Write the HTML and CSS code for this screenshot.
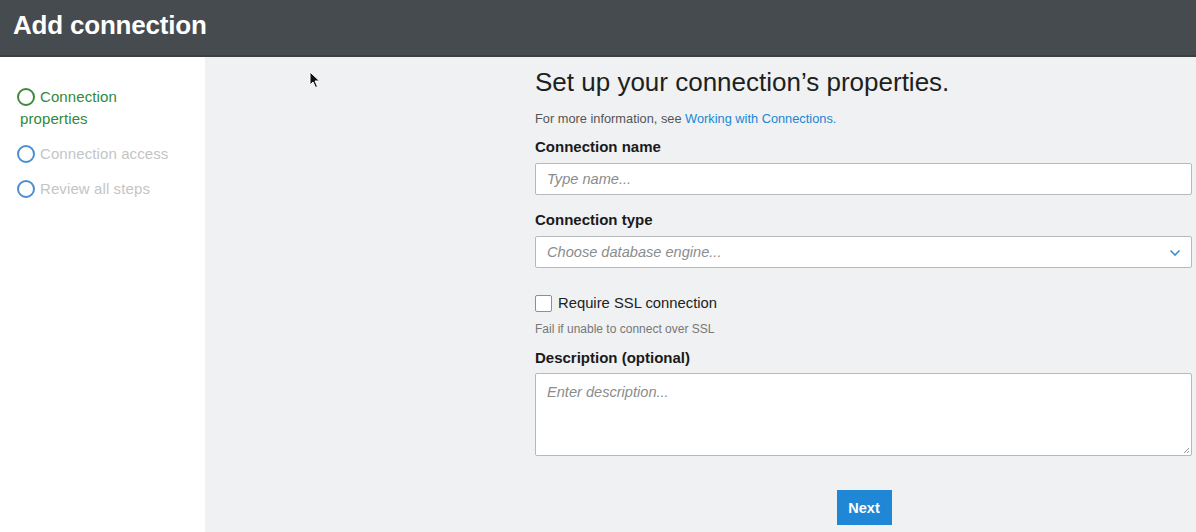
FILE: index.html
```html
<!DOCTYPE html>
<html>
<head>
<meta charset="utf-8">
<link rel="stylesheet" href="styles.css">
</head>
<body>
<header class="topbar"><h1 class="title">Add connection</h1></header>
<div class="layout">
  <nav class="steps">
    <div class="step active"><span class="dot"></span>Connection properties</div>
    <div class="step"><span class="dot"></span>Connection access</div>
    <div class="step"><span class="dot"></span>Review all steps</div>
  </nav>
  <main class="main">
    <svg class="cursor" width="12" height="18" viewBox="0 0 12 18"><path d="M1 1 L1 14 L4 11 L6.5 16.5 L8.5 15.5 L6 10 L10.5 10 Z" fill="#111" stroke="#fff" stroke-width="1"/></svg>
    <form class="form">
      <h2 class="heading">Set up your connection’s properties.</h2>
      <p class="info">For more information, see <a class="link">Working with Connections.</a></p>
      <label class="label">Connection name</label>
      <div class="input"><span class="ph">Type name...</span></div>
      <label class="label">Connection type</label>
      <div class="input select"><span class="ph">Choose database engine...</span>
        <svg class="chev" width="12" height="8" viewBox="0 0 12 8"><path d="M1.5 1.5 L6 6 L10.5 1.5" fill="none" stroke="#3c8fd0" stroke-width="1.6"/></svg>
      </div>
      <div class="check"><span class="box"></span>Require SSL connection</div>
      <p class="hint">Fail if unable to connect over SSL</p>
      <label class="label">Description (optional)</label>
      <div class="input textarea"><span class="ph">Enter description...</span>
        <svg class="grip" width="8" height="8" viewBox="0 0 8 8"><path d="M7 2 L2 7 M7 5 L5 7" stroke="#999" stroke-width="1"/></svg>
      </div>
      <div class="actions"><span class="btn">Next</span></div>
    </form>
  </main>
</div>
</body>
</html>
```
FILE: styles.css
```css
* { box-sizing: border-box; }
html, body { margin: 0; padding: 0; }
body {
  width: 1196px;
  height: 532px;
  overflow: hidden;
  font-family: "Liberation Sans", Arial, sans-serif;
  background: #eff1f2;
}
.topbar {
  height: 57px;
  background: #454b4e;
  border-bottom: 2px solid #3a3f42;
  display: flex;
  align-items: center;
  padding-left: 13px;
}
.title {
  margin: 0;
  color: #fff;
  font-size: 26px;
  font-weight: bold;
  letter-spacing: -0.2px;
  position: relative;
  top: -2px;
}
.layout {
  display: flex;
  height: 475px;
}
.steps {
  width: 205px;
  background: #fff;
  padding: 29px 0 0 17px;
  display: flex;
  flex-direction: column;
  gap: 13px;
}
.step {
  font-size: 15px;
  color: #c3c5c7;
  line-height: 22px;
  letter-spacing: 0.1px;
}
.step.active {
  color: #2f8a3c;
  width: 150px;
  padding-left: 3px;
}
.dot {
  display: inline-block;
  width: 18px;
  height: 18px;
  border: 2px solid #4a8fd0;
  border-radius: 50%;
  vertical-align: -4px;
  margin-right: 5px;
}
.step.active .dot { border-color: #3f8a3a; margin-left: -3px; }
.main {
  flex: 1;
  position: relative;
  padding: 10px 4px 0 330px;
}
.cursor {
  position: absolute;
  left: 104px;
  top: 14px;
}
.form { display: flex; flex-direction: column; }
.heading {
  margin: 0;
  font-size: 26px;
  font-weight: normal;
  color: #1d1f21;
  line-height: 30px;
}
.info {
  margin: 14px 0 0;
  font-size: 12.8px;
  line-height: 15px;
  color: #555;
}
.link { color: #1c86d4; }
.label {
  display: block;
  font-size: 15px;
  font-weight: bold;
  color: #1a1a1a;
  margin-top: 12px;
  line-height: 18px;
}
.input {
  margin-top: 7px;
  height: 32px;
  background: #fff;
  border: 1px solid #b6b9bb;
  border-radius: 2px;
  display: flex;
  align-items: center;
  padding: 0 11px;
  position: relative;
}
.ph {
  font-style: italic;
  font-size: 14.6px;
  color: #8a8c8e;
}
.input + .label { margin-top: 16px; }
.chev { position: absolute; right: 10px; top: 12px; }
.check {
  margin-top: 26px;
  display: flex;
  align-items: center;
  font-size: 14.8px;
  line-height: 18px;
  color: #222;
}
.box {
  width: 17px;
  height: 17px;
  border: 1px solid #8d9092;
  border-radius: 2px;
  background: #fff;
  margin-right: 6px;
}
.hint {
  margin: 10px 0 0;
  font-size: 12px;
  line-height: 14px;
  color: #777;
}
.hint + .label { margin-top: 13px; }
.textarea {
  margin-top: 6px;
  height: 83px;
  align-items: flex-start;
  padding-top: 10px;
}
.grip { position: absolute; right: 1px; bottom: 1px; }
.actions {
  display: flex;
  justify-content: center;
  margin-top: 34px;
}
.btn {
  width: 55px;
  height: 35px;
  background: #1f87d6;
  color: #fff;
  font-weight: bold;
  font-size: 14.5px;
  display: flex;
  align-items: center;
  justify-content: center;
  margin-left: 1px;
}
```
